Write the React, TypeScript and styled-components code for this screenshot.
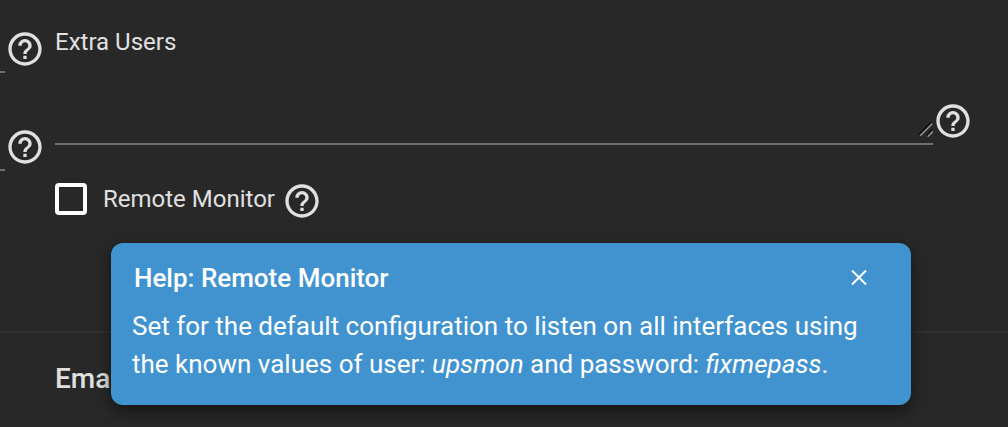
import React from "react";
import styled, { createGlobalStyle } from "styled-components";

const GlobalStyle = createGlobalStyle`
  *, *::before, *::after { box-sizing: border-box; }
  body {
    margin: 0;
    background: #282828;
    color: #e0e0e0;
    font-family: Roboto, "Liberation Sans", sans-serif;
    font-size: 24px;
    line-height: 28px;
    overflow-x: hidden;
  }
`;

const Page = styled.main`
  min-height: 100vh;
  overflow: hidden;
`;

const Columns = styled.div`
  display: grid;
  grid-template-columns: 45px minmax(0, 1fr);
  column-gap: 10px;
  padding-right: 35px;
`;

const SideColumn = styled.div`
  display: flex;
  flex-direction: column;
  gap: 58px;
  padding-top: 29px;
`;

const SideField = styled.div`
  display: flex;
  height: 40px;
`;

const SideInput = styled.input`
  width: 5px;
  height: 44px;
  padding: 0;
  border: 0;
  border-bottom: 2px solid #6e6e6e;
  border-radius: 0;
  background: transparent;
  color: inherit;
  outline: none;
`;

const MainColumn = styled.div`
  display: flex;
  flex-direction: column;
  padding-top: 28px;
`;

const IconButton = styled.button<{ $size: number }>`
  display: flex;
  flex: none;
  align-items: center;
  justify-content: center;
  width: ${(p) => p.$size}px;
  height: ${(p) => p.$size}px;
  padding: 0;
  border: 0;
  background: none;
  color: inherit;
  cursor: pointer;
`;

const UsersRow = styled.div`
  display: flex;
  align-items: flex-end;
`;

const UsersField = styled.div`
  position: relative;
  display: flex;
  flex: 1;
  flex-direction: column;
`;

const UsersArea = styled.textarea`
  display: block;
  width: 100%;
  height: 89px;
  padding: 0;
  border: 0;
  border-bottom: 2px solid #6e6e6e;
  background: transparent;
  color: inherit;
  font: inherit;
  resize: none;
  outline: none;
`;

const Grip = styled.svg`
  position: absolute;
  right: 0;
  bottom: 8px;
  pointer-events: none;
`;

const UsersHelp = styled.div`
  padding-bottom: 4px;
`;

const MonitorRow = styled.div`
  position: relative;
  display: flex;
  align-items: center;
  height: 40px;
  margin-top: 36px;
`;

const CheckLabel = styled.label`
  display: flex;
  align-items: center;
  gap: 16px;
  margin-right: 7px;
  padding-bottom: 4px;
  cursor: pointer;
`;

const Checkbox = styled.input`
  appearance: none;
  width: 32px;
  height: 32px;
  margin: 0;
  border: 4px solid #fff;
  border-radius: 4px;

  &:checked {
    background: #4193d0;
  }
`;

const Popover = styled.aside`
  position: absolute;
  z-index: 1;
  top: 62px;
  left: 56px;
  width: 800px;
  max-width: 100%;
  padding: 16px 23px 22px 21px;
  border-radius: 12px;
  background: #4193d0;
  color: #fff;
  font-size: 26px;
  line-height: 38px;
  box-shadow: 0 6px 16px rgba(0, 0, 0, 0.5);
`;

const PopoverHeader = styled.header`
  display: flex;
  align-items: center;
  justify-content: space-between;
  height: 38px;
  margin-bottom: 10px;
  padding: 0 10px 0 2px;
`;

const PopoverTitle = styled.h2`
  margin: 0;
  font-size: 26px;
  font-weight: 500;
`;

const PopoverText = styled.p`
  margin: 0;
`;

const EmailSection = styled.section`
  margin-top: 110px;
  padding: 30px 55px;
  border-top: 2px solid #303030;
`;

const SectionTitle = styled.h3`
  margin: 0;
  font-size: 28px;
  font-weight: 500;
  line-height: 32px;
`;

function HelpButton({ label }: { label: string }) {
  return (
    <IconButton type="button" $size={40} aria-label={label}>
      <svg width="40" height="40" viewBox="0 0 24 24" fill="currentColor" aria-hidden="true">
        <path d="M11 18h2v-2h-2v2zm1-16C6.480 2 2 6.480 2 12s4.480 10 10 10 10-4.480 10-10S17.520 2 12 2zm0 18c-4.410 0-8-3.590-8-8s3.590-8 8-8 8 3.590 8 8-3.590 8-8 8zm0-14c-2.210 0-4 1.790-4 4h2c0-1.100.900-2 2-2s2 .900 2 2c0 2-3 1.750-3 5h2c0-2.250 3-2.500 3-5 0-2.210-1.790-4-4-4z" />
      </svg>
    </IconButton>
  );
}

export default function App() {
  return (
    <>
      <GlobalStyle />
      <Page>
        <Columns>
          <SideColumn>
            <SideField>
              <SideInput type="text" aria-label="Monitor user" />
              <HelpButton label="Help: Monitor user" />
            </SideField>
            <SideField>
              <SideInput type="text" aria-label="Monitor password" />
              <HelpButton label="Help: Monitor password" />
            </SideField>
          </SideColumn>
          <MainColumn>
            <UsersRow>
              <UsersField>
                <label htmlFor="extra-users">Extra Users</label>
                <UsersArea id="extra-users" />
                <Grip width="16" height="16" viewBox="0 0 16 16" fill="none" aria-hidden="true">
                  <path d="M2 13.500L14 1.500M9.500 14.500L15.500 8.500" stroke="#0c0c0c" strokeWidth="1.500" />
                  <path d="M3.200 14.700L15.200 2.700M10.700 15.700L16 10.400" stroke="#949494" strokeWidth="1.500" />
                </Grip>
              </UsersField>
              <UsersHelp>
                <HelpButton label="Help: Extra Users" />
              </UsersHelp>
            </UsersRow>
            <MonitorRow>
              <CheckLabel>
                <Checkbox type="checkbox" />
                Remote Monitor
              </CheckLabel>
              <HelpButton label="Help: Remote Monitor" />
              <Popover role="dialog" aria-labelledby="help-title">
                <PopoverHeader>
                  <PopoverTitle id="help-title">Help: Remote Monitor</PopoverTitle>
                  <IconButton type="button" $size={38} aria-label="Close">
                    <svg width="16" height="16" viewBox="0 0 16 16" stroke="currentColor" strokeWidth="2" aria-hidden="true">
                      <path d="M1 0.500L15 14.500M15 0.500L1 14.500" />
                    </svg>
                  </IconButton>
                </PopoverHeader>
                <PopoverText>
                  Set for the default configuration to listen on all interfaces using the known values of
                  user: <em>upsmon</em> and password: <em>fixmepass</em>.
                </PopoverText>
              </Popover>
            </MonitorRow>
          </MainColumn>
        </Columns>
        <EmailSection>
          <SectionTitle>Email</SectionTitle>
        </EmailSection>
      </Page>
    </>
  );
}
